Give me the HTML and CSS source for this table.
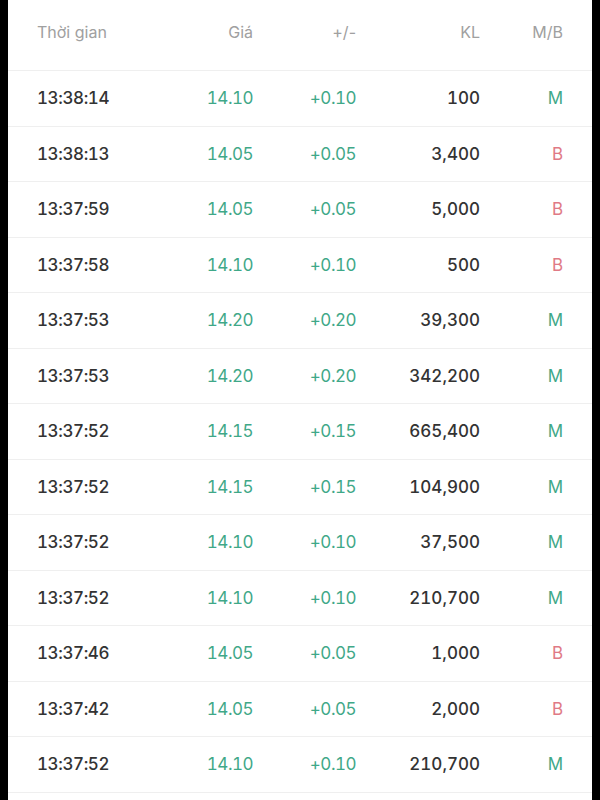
FILE: index.html
```html
<!DOCTYPE html>
<html lang="vi">
<head>
<meta charset="utf-8">
<title>Khớp lệnh</title>
<link rel="stylesheet" href="styles.css">
</head>
<body>
<div class="panel">
  <div class="row head">
    <div class="c-time">Thời gian</div>
    <div class="c-num">Giá</div>
    <div class="c-num">+/-</div>
    <div class="c-num">KL</div>
    <div class="c-num">M/B</div>
  </div>
  <div class="list">
    <div class="row"><div class="c-time t">13:38:14</div><div class="c-num up">14.10</div><div class="c-num up">+0.10</div><div class="c-num vol">100</div><div class="c-num buy">M</div></div>
    <div class="row"><div class="c-time t">13:38:13</div><div class="c-num up">14.05</div><div class="c-num up">+0.05</div><div class="c-num vol">3,400</div><div class="c-num sell">B</div></div>
    <div class="row"><div class="c-time t">13:37:59</div><div class="c-num up">14.05</div><div class="c-num up">+0.05</div><div class="c-num vol">5,000</div><div class="c-num sell">B</div></div>
    <div class="row"><div class="c-time t">13:37:58</div><div class="c-num up">14.10</div><div class="c-num up">+0.10</div><div class="c-num vol">500</div><div class="c-num sell">B</div></div>
    <div class="row"><div class="c-time t">13:37:53</div><div class="c-num up">14.20</div><div class="c-num up">+0.20</div><div class="c-num vol">39,300</div><div class="c-num buy">M</div></div>
    <div class="row"><div class="c-time t">13:37:53</div><div class="c-num up">14.20</div><div class="c-num up">+0.20</div><div class="c-num vol">342,200</div><div class="c-num buy">M</div></div>
    <div class="row"><div class="c-time t">13:37:52</div><div class="c-num up">14.15</div><div class="c-num up">+0.15</div><div class="c-num vol">665,400</div><div class="c-num buy">M</div></div>
    <div class="row"><div class="c-time t">13:37:52</div><div class="c-num up">14.15</div><div class="c-num up">+0.15</div><div class="c-num vol">104,900</div><div class="c-num buy">M</div></div>
    <div class="row"><div class="c-time t">13:37:52</div><div class="c-num up">14.10</div><div class="c-num up">+0.10</div><div class="c-num vol">37,500</div><div class="c-num buy">M</div></div>
    <div class="row"><div class="c-time t">13:37:52</div><div class="c-num up">14.10</div><div class="c-num up">+0.10</div><div class="c-num vol">210,700</div><div class="c-num buy">M</div></div>
    <div class="row"><div class="c-time t">13:37:46</div><div class="c-num up">14.05</div><div class="c-num up">+0.05</div><div class="c-num vol">1,000</div><div class="c-num sell">B</div></div>
    <div class="row"><div class="c-time t">13:37:42</div><div class="c-num up">14.05</div><div class="c-num up">+0.05</div><div class="c-num vol">2,000</div><div class="c-num sell">B</div></div>
    <div class="row"><div class="c-time t">13:37:52</div><div class="c-num up">14.10</div><div class="c-num up">+0.10</div><div class="c-num vol">210,700</div><div class="c-num buy">M</div></div>
  </div>
</div>
</body>
</html>
```

FILE: styles.css
```css
html, body {
  margin: 0;
  padding: 0;
  background: #000;
}
body {
  font-family: Inter, "Noto Sans", "Liberation Sans", sans-serif;
  height: 800px;
  overflow: hidden;
}
.panel {
  margin: 0 8px;
  width: 584px;
  height: 800px;
  background: #fff;
}
.row {
  display: grid;
  grid-template-columns: 116px 100px 103px 124px 83px;
  padding: 0 29px;
  align-items: center;
  box-sizing: border-box;
  height: 55.5px;
  border-top: 1px solid #efefef;
  font-size: 17px;
}
.list .row {
  font-variant-numeric: tabular-nums;
}
.row.head {
  height: 70px;
  border-top: none;
  align-items: start;
  padding-top: 22px;
  font-size: 16px;
  color: #a0a0a0;
  line-height: 20px;
}
.list {
  border-bottom: 1px solid #efefef;
}
.c-time { text-align: left; }
.c-num { text-align: right; }
.t { color: #333; font-weight: 500; letter-spacing: -0.4px; }
.vol { color: #333; font-weight: 500; }
.up { color: #3fa888; letter-spacing: -0.5px; }
.buy { color: #3fa888; }
.sell { color: #e07a85; }
```
